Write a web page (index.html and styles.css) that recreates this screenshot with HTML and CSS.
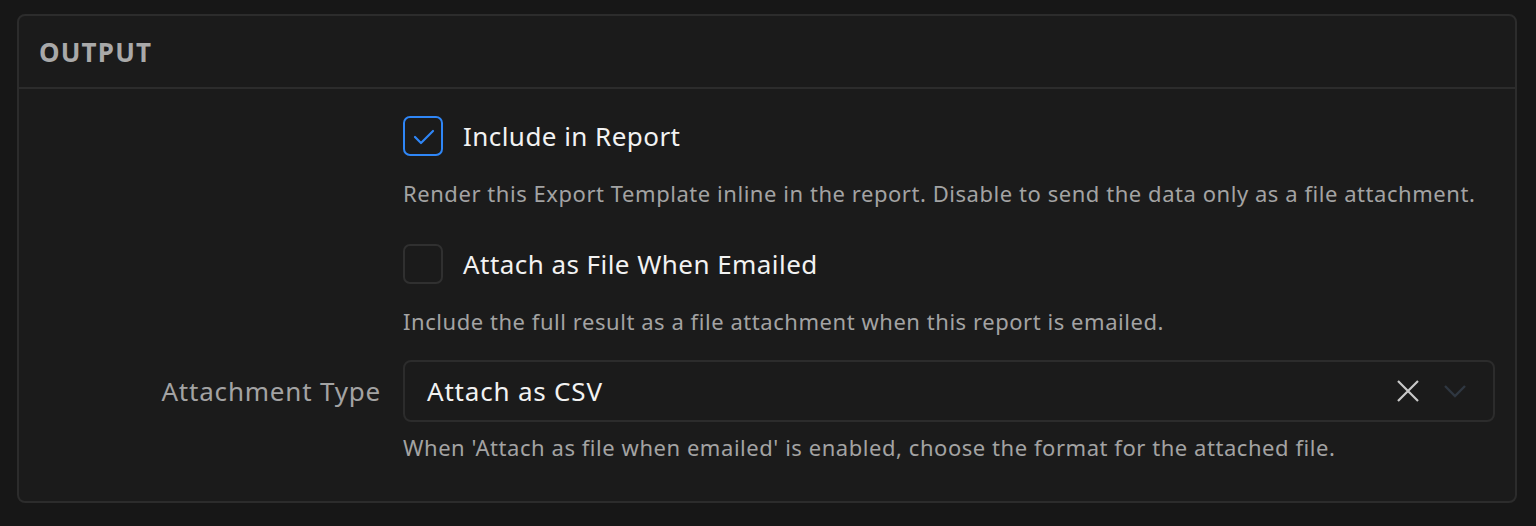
FILE: index.html
```html
<!DOCTYPE html>
<html lang="en">
<head>
  <meta charset="UTF-8" />
  <meta name="viewport" content="width=device-width, initial-scale=1.0" />
  <title>Output Settings</title>
  <link rel="stylesheet" href="styles.css">
</head>
<body>
  <section class="panel">
    <header class="panel-head">OUTPUT</header>

    <div class="panel-body">
      <!-- include in report -->
      <div class="field">
        <div class="field-label"></div>
        <div class="field-main">
          <label class="check">
            <span class="box checked">
              <svg viewBox="0 0 40 40" width="40" height="40"><path d="M12 21l6 6 12-12" /></svg>
            </span>
            <span class="check-text">Include in Report</span>
          </label>
          <p class="help">Render this Export Template inline in the report. Disable to send the data only as a file attachment.</p>
        </div>
      </div>

      <!-- attach when emailed -->
      <div class="field">
        <div class="field-label"></div>
        <div class="field-main">
          <label class="check">
            <span class="box"></span>
            <span class="check-text">Attach as File When Emailed</span>
          </label>
          <p class="help">Include the full result as a file attachment when this report is emailed.</p>
        </div>
      </div>

      <!-- attachment type -->
      <div class="field">
        <div class="field-label select-label">Attachment Type</div>
        <div class="field-main">
          <div class="select">
            <span class="select-value">Attach as CSV</span>
            <svg class="clear" viewBox="0 0 24 24" width="24" height="24"><path d="M2 2l20 20M22 2L2 22" /></svg>
            <svg class="caret" viewBox="0 0 22 14" width="22" height="14"><path d="M1 2l10 10 10-10" /></svg>
          </div>
          <p class="help">When 'Attach as file when emailed' is enabled, choose the format for the attached file.</p>
        </div>
      </div>
    </div>
  </section>
</body>
</html>
```

FILE: styles.css
```css
:root {
  --page: #171717;
  --panel: #1b1b1b;
  --line: #2c2c2c;
  --text: #f2f2f2;
  --muted: #a3a3a3;
  --head: #a9a9a9;
  --blue: #2f86f6;
}

body {
  margin: 0;
  background: var(--page);
  font-family: "Noto Sans", "Open Sans", sans-serif;
  color: var(--text);
}

.panel {
  margin: 14px 19px 0 17px;
  background: var(--panel);
  border: 2px solid var(--line);
  border-radius: 8px;
}

.panel-head {
  height: 73px;
  box-sizing: border-box;
  padding: 0 20px;
  display: flex;
  align-items: center;
  border-bottom: 2px solid var(--line);
  font-size: 26px;
  font-weight: 700;
  color: var(--head);
  letter-spacing: 1.2px;
}

.panel-body {
  padding: 27px 20px 40px 0;
  display: flex;
  flex-direction: column;
  gap: 37px;
}

.panel-body .field:last-child {
  margin-top: -12px;
}

.field {
  display: grid;
  grid-template-columns: 362px 1fr;
  column-gap: 22px;
}

.field-label {
  text-align: right;
  font-size: 26px;
  letter-spacing: 0.8px;
  color: var(--muted);
}

.select-label {
  line-height: 62px;
}

.field-main {
  display: flex;
  flex-direction: column;
}

.check {
  display: flex;
  align-items: center;
  gap: 20px;
  height: 40px;
}

.box {
  width: 40px;
  height: 40px;
  box-sizing: border-box;
  border: 2px solid #303030;
  border-radius: 7px;
  flex: none;
}

.box svg {
  display: block;
  margin: -2px;
}

.box svg path {
  fill: none;
  stroke: var(--blue);
  stroke-width: 2.2;
  stroke-linecap: round;
  stroke-linejoin: round;
}

.box.checked {
  border-color: var(--blue);
}

.check-text {
  font-size: 26px;
  letter-spacing: 0.45px;
  color: var(--text);
}

.help {
  margin: 23px 0 0;
  font-size: 22px;
  letter-spacing: 0.55px;
  line-height: 28px;
  color: var(--muted);
}

.select {
  height: 62px;
  box-sizing: border-box;
  border: 2px solid var(--line);
  border-radius: 8px;
  display: flex;
  align-items: center;
  padding: 0 27px 0 22px;
}

.select + .help {
  margin-top: 11px;
}

.select-value {
  flex: 1;
  font-size: 26px;
  letter-spacing: 0.8px;
  color: var(--text);
}

.clear path {
  stroke: #c9c9c9;
  stroke-width: 2.2;
  fill: none;
}

.caret {
  margin-left: 24px;
}

.caret path {
  stroke: #2f3741;
  stroke-width: 2.4;
  fill: none;
}
```
